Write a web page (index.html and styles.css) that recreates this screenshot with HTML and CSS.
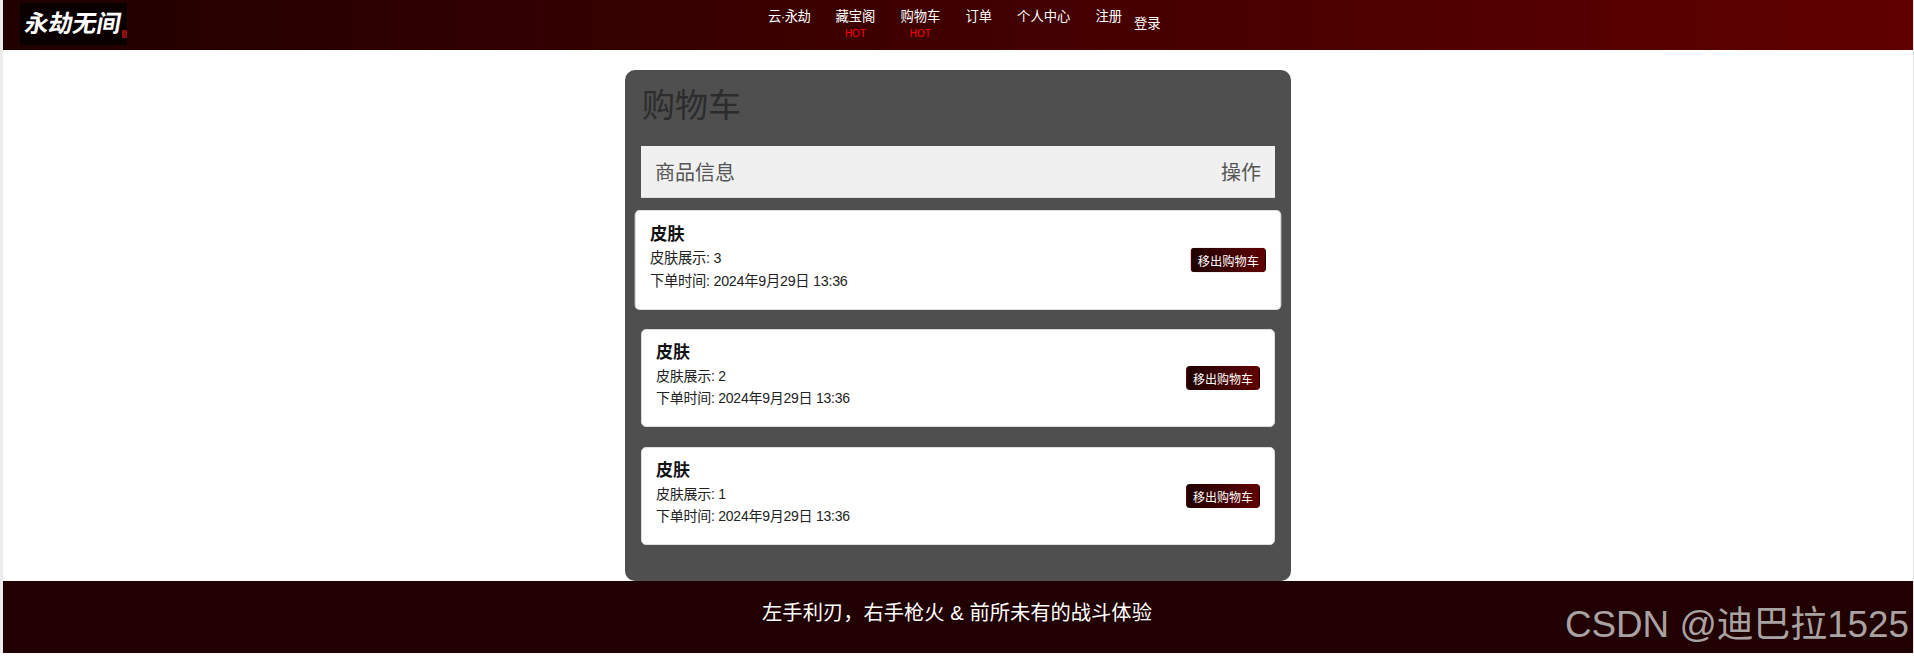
FILE: index.html
```html
<!doctype html>
<html lang="zh">
<head>
  <meta charset="UTF-8" />
  <title>购物车</title>
  <link rel="stylesheet" href="styles.css">
</head>
<body>
  <div class="page">
    <header class="topbar">
      <a class="logo" href="#">
        <span class="logo-text">永劫无间</span>
        <span class="logo-seal"></span>
      </a>
      <nav class="nav">
        <a class="nav-item" href="#">云·永劫</a>
        <a class="nav-item" href="#">藏宝阁<span class="hot">HOT</span></a>
        <a class="nav-item" href="#">购物车<span class="hot">HOT</span></a>
        <a class="nav-item" href="#">订单</a>
        <a class="nav-item" href="#">个人中心</a>
        <a class="nav-item" href="#">注册</a>
        <a class="nav-login" href="#">登录</a>
      </nav>
    </header>

    <main class="main">
      <section class="cart">
        <h1>购物车</h1>
        <div class="cart-head">
          <span>商品信息</span>
          <span>操作</span>
        </div>
        <div class="cart-item active">
          <div class="item-info">
            <h3>皮肤</h3>
            <p>皮肤展示: 3</p>
            <p>下单时间: 2024年9月29日 13:36</p>
          </div>
          <button class="remove">移出购物车</button>
        </div>
        <div class="cart-item">
          <div class="item-info">
            <h3>皮肤</h3>
            <p>皮肤展示: 2</p>
            <p>下单时间: 2024年9月29日 13:36</p>
          </div>
          <button class="remove">移出购物车</button>
        </div>
        <div class="cart-item">
          <div class="item-info">
            <h3>皮肤</h3>
            <p>皮肤展示: 1</p>
            <p>下单时间: 2024年9月29日 13:36</p>
          </div>
          <button class="remove">移出购物车</button>
        </div>
      </section>
    </main>

    <footer class="footer">
      <p>左手利刃，右手枪火 &amp; 前所未有的战斗体验</p>
      <span class="watermark">CSDN @迪巴拉1525</span>
    </footer>
  </div>
</body>
</html>
```

FILE: styles.css
```css
html, body {
  margin: 0;
  padding: 0;
  background: #fff;
}
body {
  font-family: "Liberation Sans", "Noto Sans CJK SC", sans-serif;
  color: #111;
  height: 657px;
  overflow: hidden;
}
a {
  color: inherit;
  text-decoration: none;
}
.page {
  margin-left: 3px;
  margin-right: 1px;
  height: 653px;
  display: flex;
  flex-direction: column;
  box-shadow: -3px 0 0 #ececec, 1px 0 0 #e4e4e4;
}

/* top bar */
.topbar {
  height: 50px;
  flex: none;
  display: flex;
  background: linear-gradient(to right, #200000, #600000);
  color: #fff;
}
.logo {
  width: 107px;
  height: 42px;
  margin: 3px 0 0 17px;
  background: #0b0000;
  position: relative;
  display: block;
  flex: none;
}
.logo-text {
  display: block;
  padding-left: 5px;
  font-size: 24px;
  font-weight: 700;
  line-height: 42px;
  white-space: nowrap;
  transform: skewX(-10deg);
}
.logo-seal {
  position: absolute;
  left: 102px;
  top: 27px;
  width: 5px;
  height: 8px;
  background: #8c0f0f;
}
.nav {
  display: flex;
  margin-left: 641px;
  font-size: 13.33px;
}
.nav-item {
  margin-right: 25px;
  padding-top: 7px;
  display: flex;
  flex-direction: column;
  align-items: center;
  line-height: 19px;
  white-space: nowrap;
}
.nav-item:first-child {
  letter-spacing: -0.5px;
}
.nav-item:nth-child(6) {
  margin-right: 12px;
}
.hot {
  color: #f00;
  font-size: 10px;
  line-height: 15px;
}
.nav-login {
  padding-top: 15px;
  line-height: 18px;
}

/* cart */
.main {
  flex: 1;
  min-height: 0;
  padding: 20px 0 0 622px;
}
.cart {
  width: 666px;
  height: 511px;
  box-sizing: border-box;
  padding: 0 16px;
  background: #4f4f4f;
  border-radius: 10px;
}
.cart h1 {
  margin: 0;
  padding: 15px 0 0 1px;
  height: 76px;
  box-sizing: border-box;
  font-size: 33px;
  line-height: 42px;
  font-weight: 400;
  color: #2c2c2c;
}
.cart-head {
  height: 52px;
  box-sizing: border-box;
  padding: 0 14px;
  display: flex;
  justify-content: space-between;
  align-items: center;
  background: #f0f0f0;
  font-size: 20px;
  color: #555;
  border-bottom: 1px solid #ddd;
}
.cart-item {
  height: 98px;
  margin-top: 20px;
  box-sizing: border-box;
  padding: 0 14px;
  display: flex;
  justify-content: space-between;
  align-items: center;
  background: #fff;
  border: 1px solid #ddd;
  border-radius: 5px;
}
.cart-head + .cart-item {
  margin-top: 13px;
}
.cart-item.active {
  transform: scale(1.02);
}
.item-info {
  align-self: flex-start;
  padding-top: 11px;
}
.item-info h3 {
  margin: 0;
  font-size: 17px;
  line-height: 24px;
  font-weight: 700;
  color: #111;
}
.item-info p {
  margin: 0;
  font-size: 14px;
  line-height: 22px;
  letter-spacing: -0.25px;
  color: #222;
}
.remove {
  width: 74px;
  height: 24px;
  padding: 0;
  border: 1px solid transparent;
  border-radius: 4px;
  background: linear-gradient(to right, #200000, #600000);
  color: #fff;
  font-family: inherit;
  font-size: 12px;
}

/* footer */
.footer {
  height: 72px;
  flex: none;
  position: relative;
  display: flex;
  justify-content: center;
  align-items: center;
  background: #200000;
  color: #fff;
}
.footer p {
  margin: 0;
  padding: 0 2px 12px 0;
  font-size: 20.3px;
}
.watermark {
  position: absolute;
  right: 4px;
  top: 23px;
  font-size: 36.8px;
  line-height: 42px;
  color: #a8a2a2;
  white-space: nowrap;
}
```
